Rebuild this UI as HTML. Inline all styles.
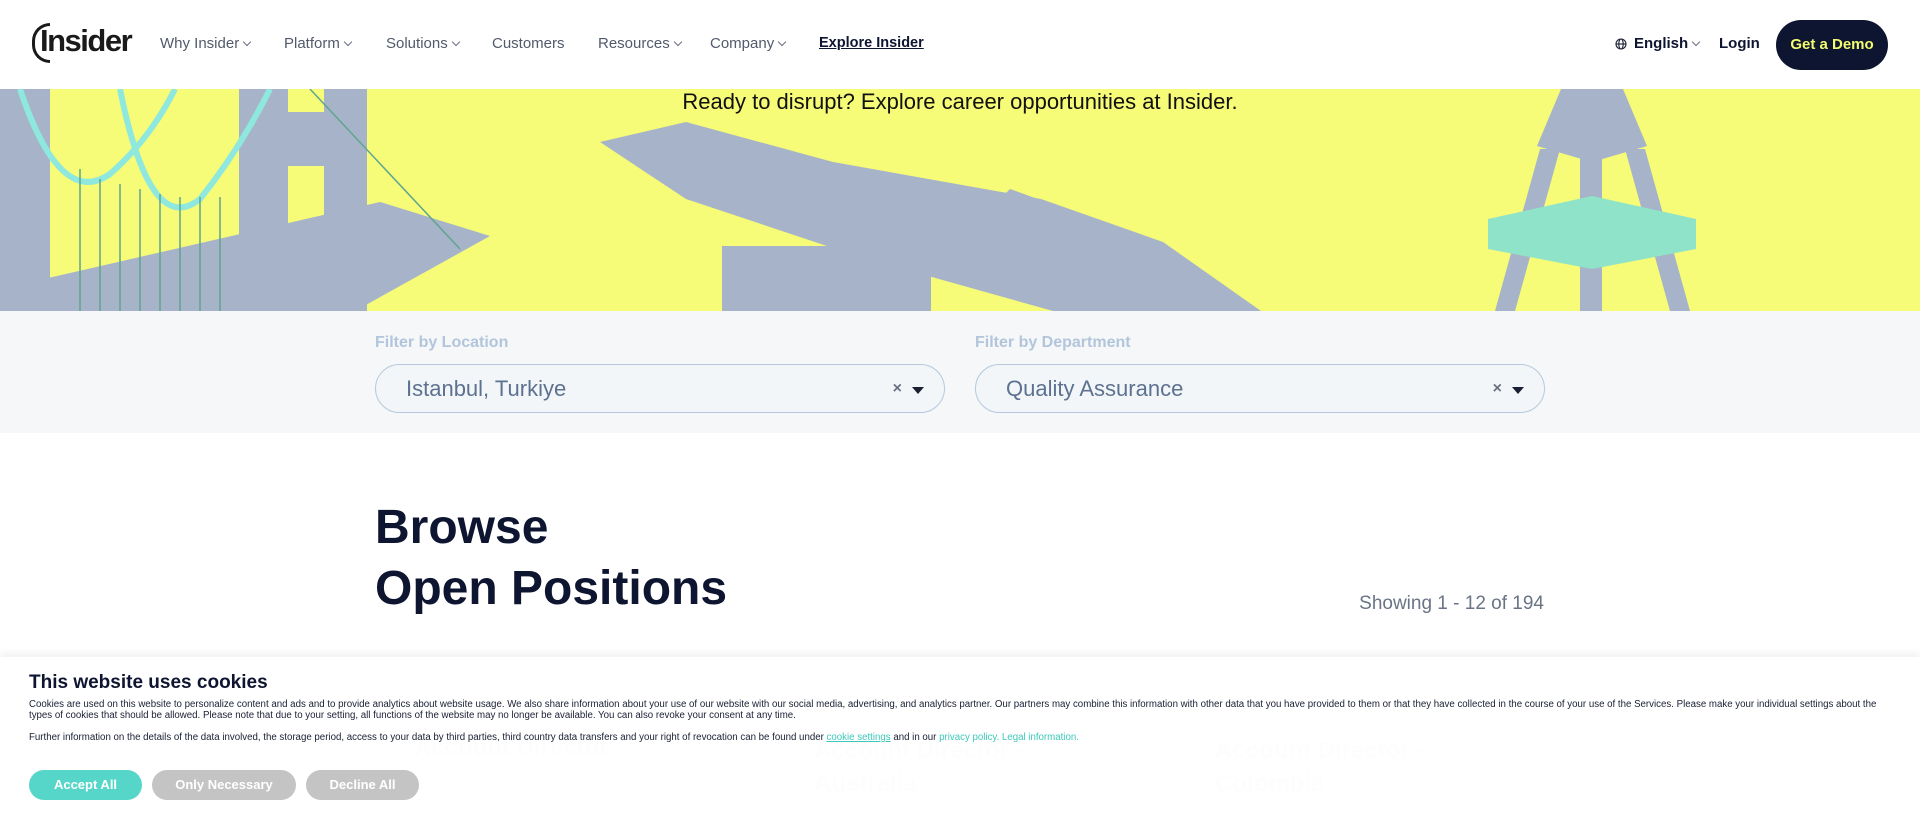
<!DOCTYPE html>
<html><head><meta charset="utf-8"><style>
*{margin:0;padding:0;box-sizing:border-box}
body{width:1920px;height:820px;overflow:hidden;background:#fff;font-family:"Liberation Sans",sans-serif;position:relative}
.abs{position:absolute;white-space:nowrap}
.nav{font-size:15px;color:#525a6b;top:35px}
.chev{display:inline-block;width:6px;height:6px;border-right:1.3px solid #6a7080;border-bottom:1.3px solid #6a7080;transform:rotate(45deg);margin-left:5px;position:relative;top:-3px}
.sel{position:absolute;top:364px;height:49px;width:570px;border:1px solid #b5c8dd;border-radius:25px;background:#f3f6f9}
.sel span{position:absolute;left:30px;top:11px;font-size:22px;color:#5c7290}
.sel .x{position:absolute;right:42px;top:15px;font-size:16px;color:#6a7080}
.sel .tri{position:absolute;right:20px;top:22px;width:0;height:0;border-left:6px solid transparent;border-right:6px solid transparent;border-top:7px solid #1a1f33}
.lbl{font-size:16px;color:#b2c5db;font-weight:bold;top:334px}
.btn{position:absolute;top:770px;height:30px;border-radius:15px;color:#fff;font-size:13px;font-weight:bold;text-align:center;line-height:30px}
</style></head><body>
<!-- header -->
<div class="abs" style="left:32px;top:23px;font-size:31px;font-weight:bold;color:#1a1a1a;letter-spacing:-1.5px">
<span style="display:inline-block;width:18px;height:40px;border:3px solid #1a1a1a;border-right:none;border-radius:20px 0 0 20px;position:absolute;left:0;top:0"></span><span style="margin-left:8px">Insider</span></div>
<div class="abs nav" style="left:160px">Why Insider<i class="chev"></i></div>
<div class="abs nav" style="left:284px">Platform<i class="chev"></i></div>
<div class="abs nav" style="left:386px">Solutions<i class="chev"></i></div>
<div class="abs nav" style="left:492px">Customers</div>
<div class="abs nav" style="left:598px">Resources<i class="chev"></i></div>
<div class="abs nav" style="left:710px">Company<i class="chev"></i></div>
<div class="abs nav" style="left:819px;color:#0e1530;font-weight:bold;text-decoration:underline;font-size:14.5px">Explore Insider</div>
<svg class="abs" style="left:1615px;top:38px" width="12" height="12" viewBox="0 0 12 12" fill="none" stroke="#1a1f33" stroke-width="1.1"><circle cx="6" cy="6" r="5"/><ellipse cx="6" cy="6" rx="2.2" ry="5"/><path d="M1 6h10"/></svg>
<div class="abs" style="left:1634px;top:35px;font-size:15px;color:#0e1530;font-weight:bold">English<i class="chev"></i></div>
<div class="abs" style="left:1719px;top:35px;font-size:15px;color:#0e1530;font-weight:bold">Login</div>
<div class="abs" style="left:1776px;top:20px;width:112px;height:50px;border-radius:25px;background:#0e1530;color:#f3fb6e;font-size:15px;font-weight:bold;text-align:center;line-height:50px">Get a Demo</div>
<!-- hero -->
<div class="abs" style="left:0;top:89px;width:1920px;height:222px;background:#f6fb78;overflow:hidden">
<svg width="1920" height="222" viewBox="0 0 1920 222">
<g fill="#a7b3c9">
<rect x="0" y="0" width="50" height="222"/>
<rect x="239" y="0" width="49" height="222"/>
<rect x="324" y="0" width="43" height="222"/>
<rect x="262" y="23" width="105" height="54"/>
<polygon points="0,200 380,113 490,147 355,222 0,222"/>
<polygon points="600,53 686,33 833,73 1041,110 1163,153 1261,222 1053,222 857,167 686,110"/>
<rect x="722" y="157" width="209" height="65"/>
<polygon points="990,120 1010,100 1120,140 1160,170 1150,190 1100,175"/>
<polygon points="1561,0 1623,0 1647,57 1592,73 1537,57"/>
<polygon points="1540,60 1560,60 1515,222 1495,222"/>
<polygon points="1625,60 1645,60 1690,222 1670,222"/>
<rect x="1580" y="60" width="22" height="162"/>
</g>
<polygon fill="#8fe3c8" points="1488,130 1592,107 1696,130 1696,160 1592,180 1488,160"/>
<g stroke="#8ee8dd" stroke-width="6" fill="none"><path d="M20 0 Q60 120 110 85 Q150 50 175 0"/><path d="M120 0 Q150 150 200 110 Q240 60 270 0"/></g>
<g stroke="#5fa58e" stroke-width="1.5"><path d="M80 80V222M100 90V222M120 95V222M140 100V222M160 105V222M180 108V222M200 108V222M220 108V222M310 0L460 160"/></g>
</svg>
<div class="abs" style="left:0;width:1920px;text-align:center;top:0;font-size:22px;color:#111">Ready to disrupt? Explore career opportunities at Insider.</div>
</div>
<!-- filters -->
<div class="abs" style="left:0;top:311px;width:1920px;height:122px;background:#f5f7f9"></div>
<div class="abs lbl" style="left:375px">Filter by Location</div>
<div class="abs lbl" style="left:975px">Filter by Department</div>
<div class="sel" style="left:375px"><span>Istanbul, Turkiye</span><b class="x">×</b><i class="tri"></i></div>
<div class="sel" style="left:975px"><span>Quality Assurance</span><b class="x">×</b><i class="tri"></i></div>
<!-- browse -->
<div class="abs" style="left:375px;top:497px;font-size:48px;font-weight:bold;color:#0e1530;line-height:61px;white-space:normal">Browse<br>Open Positions</div>
<div class="abs" style="right:376px;top:593px;font-size:19px;color:#6a7485">Showing 1 - 12 of 194</div>
<!-- faint cards -->
<div class="abs" style="left:414px;top:734px;font-size:24px;color:#e2e5ea;font-weight:bold">Account Director</div>
<div class="abs" style="left:814px;top:734px;font-size:24px;color:#e2e5ea;font-weight:bold;line-height:33px">Account Director -<br>Australia</div>
<div class="abs" style="left:1215px;top:734px;font-size:24px;color:#e2e5ea;font-weight:bold;line-height:33px">Account Director -<br>Colombia</div>
<!-- cookie -->
<div class="abs" style="left:0;top:657px;width:1920px;height:163px;background:rgba(255,255,255,0.93);box-shadow:0 -4px 8px rgba(0,0,0,0.06)"></div>
<div class="abs" style="left:29px;top:672px;font-size:19px;font-weight:bold;color:#0e1530">This website uses cookies</div>
<div class="abs" style="left:29px;top:699px;width:1850px;white-space:normal;font-size:9.7px;line-height:11px;color:#1a1f33">Cookies are used on this website to personalize content and ads and to provide analytics about website usage. We also share information about your use of our website with our social media, advertising, and analytics partner. Our partners may combine this information with other data that you have provided to them or that they have collected in the course of your use of the Services. Please make your individual settings about the types of cookies that should be allowed. Please note that due to your setting, all functions of the website may no longer be available. You can also revoke your consent at any time.</div>
<div class="abs" style="left:29px;top:732px;font-size:9.7px;color:#1a1f33">Further information on the details of the data involved, the storage period, access to your data by third parties, third country data transfers and your right of revocation can be found under <span style="color:#3cc8b8;text-decoration:underline">cookie settings</span> and in our <span style="color:#3cc8b8">privacy policy. Legal information.</span></div>
<div class="btn" style="left:29px;width:113px;background:#56d6c8">Accept All</div>
<div class="btn" style="left:152px;width:144px;background:#c4c4c4">Only Necessary</div>
<div class="btn" style="left:306px;width:113px;background:#c4c4c4">Decline All</div>
</body></html>
